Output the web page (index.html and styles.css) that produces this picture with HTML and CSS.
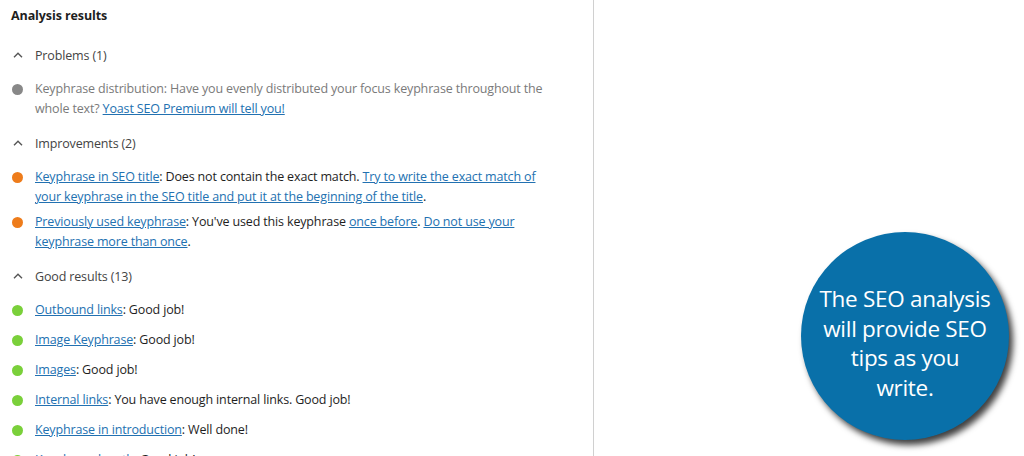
FILE: index.html
```html
<!DOCTYPE html>
<html lang="en">
<head>
<meta charset="utf-8">
<title>Analysis results</title>
<link rel="stylesheet" href="styles.css">
</head>
<body>
<div class="page">
  <div class="panel">
    <h2 class="title">Analysis results</h2>

    <section class="group">
      <div class="group-head"><svg class="chev" width="10" height="6" viewBox="0 0 10 6"><path d="M1 5.2 L5 1.2 L9 5.2" fill="none" stroke="#555" stroke-width="1.4"/></svg><span>Problems (1)</span></div>
      <ul class="results">
        <li class="muted"><span class="dot gray"></span><p>Keyphrase distribution: Have you evenly distributed your focus keyphrase throughout the whole text? <a href="#">Yoast SEO Premium will tell you!</a></p></li>
      </ul>
    </section>

    <section class="group">
      <div class="group-head"><svg class="chev" width="10" height="6" viewBox="0 0 10 6"><path d="M1 5.2 L5 1.2 L9 5.2" fill="none" stroke="#555" stroke-width="1.4"/></svg><span>Improvements (2)</span></div>
      <ul class="results">
        <li><span class="dot orange"></span><p><a href="#">Keyphrase in SEO title</a>: Does not contain the exact match. <a href="#">Try to write the exact match of your keyphrase in the SEO title and put it at the beginning of the title</a>.</p></li>
        <li><span class="dot orange"></span><p><a href="#">Previously used keyphrase</a>: You've used this keyphrase <a href="#">once before</a>. <a href="#">Do not use your keyphrase more than once</a>.</p></li>
      </ul>
    </section>

    <section class="group">
      <div class="group-head"><svg class="chev" width="10" height="6" viewBox="0 0 10 6"><path d="M1 5.2 L5 1.2 L9 5.2" fill="none" stroke="#555" stroke-width="1.4"/></svg><span>Good results (13)</span></div>
      <ul class="results">
        <li><span class="dot green"></span><p><a href="#">Outbound links</a>: Good job!</p></li>
        <li><span class="dot green"></span><p><a href="#">Image Keyphrase</a>: Good job!</p></li>
        <li><span class="dot green"></span><p><a href="#">Images</a>: Good job!</p></li>
        <li><span class="dot green"></span><p><a href="#">Internal links</a>: You have enough internal links. Good job!</p></li>
        <li><span class="dot green"></span><p><a href="#">Keyphrase in introduction</a>: Well done!</p></li>
        <li><span class="dot green"></span><p><a href="#">Keyphrase length</a>: Good job!</p></li>
      </ul>
    </section>
  </div>
  <div class="side"></div>
  <div class="badge"><p>The SEO analysis<br>will provide SEO<br>tips as you<br>write.</p></div>
</div>
</body>
</html>
```

FILE: styles.css
```css
* { box-sizing: border-box; }
html, body { margin: 0; padding: 0; background: #fff; }
body { font-family: "Open Sans", "Noto Sans", sans-serif; font-size: 12.5px; letter-spacing: -0.15px; color: #1e1e1e; overflow: hidden; }
.page { position: relative; display: flex; height: 456px; overflow: hidden; }
.panel { width: 594px; border-right: 1px solid #d0d0d0; padding: 7px 38px 0 0; flex: none; }
.side { flex: 1; }
.title { margin: 0 0 20px 11px; font-size: 12.5px; font-weight: 700; line-height: 18px; color: #1e1e1e; letter-spacing: -0.1px; }
.group { padding-bottom: 9px; }
.group-head { display: flex; align-items: center; height: 20px; margin-bottom: 14px; color: #444; }
.chev { margin: 0 12px 0 13px; flex: none; }
.results { list-style: none; margin: 0; padding: 0; display: flex; flex-direction: column; gap: 5px; padding-bottom: 5px; }
.results li { display: flex; min-height: 25px; }
.results p { margin: 0; line-height: 20px; }
.muted p { color: #7a7a7a; }
.dot { width: 11px; height: 11px; border-radius: 50%; flex: none; margin: 5px 12px 0 12px; }
.gray { background: #888; }
.orange { background: #ee7c1b; }
.green { background: #7ad03a; }
a { color: #2271b1; text-decoration: underline; }
.badge { position: absolute; left: 801px; top: 232px; width: 208px; height: 208px; border-radius: 50%; background: #0970a9; box-shadow: 4px 5px 6px rgba(0,0,0,0.75); display: flex; align-items: center; justify-content: center; padding-top: 14px; }
.badge p { margin: 0; text-align: center; color: #fff; font-family: "Open Sans", sans-serif; font-size: 22.5px; line-height: 29.5px; letter-spacing: -0.3px; }
```
